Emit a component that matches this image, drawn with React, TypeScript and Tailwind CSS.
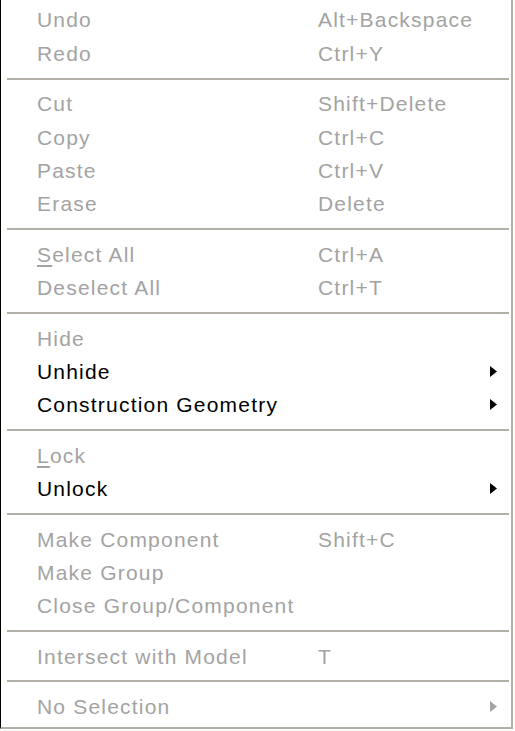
import React from 'react'

type Item = {
  label: string
  shortcut?: string
  enabled?: boolean
  submenu?: boolean
  underline?: number
}

const groups: Item[][] = [
  [
    { label: 'Undo', shortcut: 'Alt+Backspace' },
    { label: 'Redo', shortcut: 'Ctrl+Y' },
  ],
  [
    { label: 'Cut', shortcut: 'Shift+Delete' },
    { label: 'Copy', shortcut: 'Ctrl+C' },
    { label: 'Paste', shortcut: 'Ctrl+V' },
    { label: 'Erase', shortcut: 'Delete' },
  ],
  [
    { label: 'Select All', shortcut: 'Ctrl+A', underline: 0 },
    { label: 'Deselect All', shortcut: 'Ctrl+T' },
  ],
  [
    { label: 'Hide' },
    { label: 'Unhide', enabled: true, submenu: true },
    { label: 'Construction Geometry', enabled: true, submenu: true },
  ],
  [
    { label: 'Lock', underline: 0 },
    { label: 'Unlock', enabled: true, submenu: true },
  ],
  [
    { label: 'Make Component', shortcut: 'Shift+C' },
    { label: 'Make Group' },
    { label: 'Close Group/Component' },
  ],
  [{ label: 'Intersect with Model', shortcut: 'T' }],
  [{ label: 'No Selection', submenu: true }],
]

function Arrow({ color }: { color: string }) {
  return (
    <svg width="7" height="11" viewBox="0 0 7 11">
      <path d="M0 0 L7 5.5 L0 11 Z" fill={color} />
    </svg>
  )
}

function Row({ item }: { item: Item }) {
  const color = item.enabled ? 'text-black' : 'text-[#a3a3a3]'
  return (
    <div className={`flex items-center h-[33.4px] pl-[36px] pr-[14px] ${color}`}>
      <span className="w-[281px] whitespace-nowrap">
        {item.underline !== undefined ? (
          <>
            <span className="underline underline-offset-[3px]">{item.label[item.underline]}</span>
            {item.label.slice(item.underline + 1)}
          </>
        ) : (
          item.label
        )}
      </span>
      <span className="flex-1">{item.shortcut}</span>
      <span className="w-[7px] flex items-center">
        {item.submenu && <Arrow color={item.enabled ? '#000000' : '#a3a3a3'} />}
      </span>
    </div>
  )
}

export default function App() {
  return (
    <div className="w-[515px] h-[731px] bg-white">
      <div
        className="w-[513px] h-[729px] border-l border-l-black border-r-2 border-r-[#b3b0a8] border-b-2 border-b-[#b3b0a8] pt-[3.3px] text-[21px] tracking-[1.2px] leading-none"
        style={{ fontFamily: '"Liberation Sans", Arial, sans-serif' }}
      >
        {groups.map((g, i) => (
          <div key={i}>
            {i > 0 && (
              <div className="h-[17px] flex items-center pl-[6px] pr-[2px]">
                <div className="h-[2px] w-full bg-[#b3b0a8]" />
              </div>
            )}
            {g.map((item) => (
              <Row key={item.label} item={item} />
            ))}
          </div>
        ))}
      </div>
    </div>
  )
}
